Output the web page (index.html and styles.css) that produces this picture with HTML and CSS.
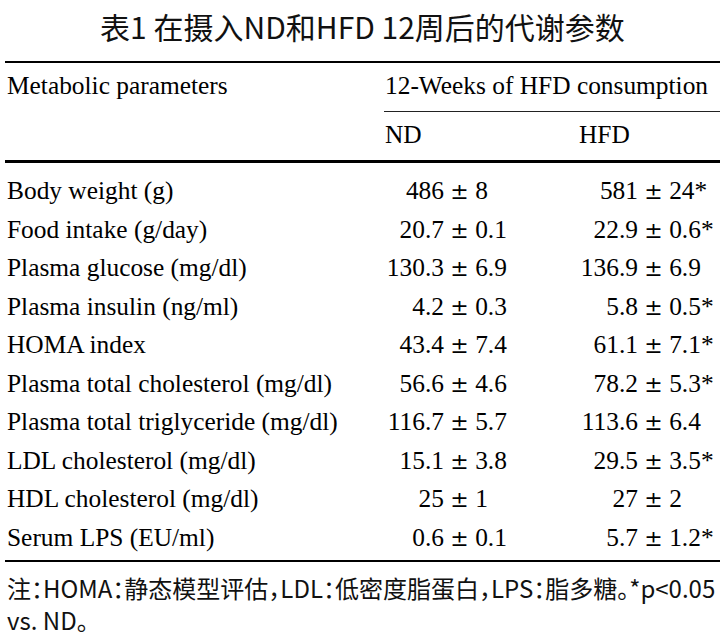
FILE: index.html
```html
<!DOCTYPE html>
<html lang="zh">
<head>
<meta charset="utf-8">
<title>表1 在摄入ND和HFD 12周后的代谢参数</title>
<link rel="stylesheet" href="styles.css">
</head>
<body>
<h1 class="title">表1 在摄入ND和HFD 12周后的代谢参数</h1>
<table class="data">
  <colgroup><col class="c-name"><col class="c-nd"><col class="c-hfd"></colgroup>
  <thead>
    <tr><th class="name" rowspan="2">Metabolic parameters</th><th class="group" colspan="2">12-Weeks of HFD consumption</th></tr>
    <tr><th class="sub">ND</th><th class="sub">HFD</th></tr>
  </thead>
  <tbody>
    <tr class="first"><td class="name">Body weight (g)</td><td class="val"><span class="l">486</span> <span class="pm">±</span> 8</td><td class="val"><span class="l">581</span> <span class="pm">±</span> 24*</td></tr>
    <tr><td class="name">Food intake (g/day)</td><td class="val"><span class="l">20.7</span> <span class="pm">±</span> 0.1</td><td class="val"><span class="l">22.9</span> <span class="pm">±</span> 0.6*</td></tr>
    <tr><td class="name">Plasma glucose (mg/dl)</td><td class="val"><span class="l">130.3</span> <span class="pm">±</span> 6.9</td><td class="val"><span class="l">136.9</span> <span class="pm">±</span> 6.9</td></tr>
    <tr><td class="name">Plasma insulin (ng/ml)</td><td class="val"><span class="l">4.2</span> <span class="pm">±</span> 0.3</td><td class="val"><span class="l">5.8</span> <span class="pm">±</span> 0.5*</td></tr>
    <tr><td class="name">HOMA index</td><td class="val"><span class="l">43.4</span> <span class="pm">±</span> 7.4</td><td class="val"><span class="l">61.1</span> <span class="pm">±</span> 7.1*</td></tr>
    <tr><td class="name">Plasma total cholesterol (mg/dl)</td><td class="val"><span class="l">56.6</span> <span class="pm">±</span> 4.6</td><td class="val"><span class="l">78.2</span> <span class="pm">±</span> 5.3*</td></tr>
    <tr><td class="name">Plasma total triglyceride (mg/dl)</td><td class="val"><span class="l">116.7</span> <span class="pm">±</span> 5.7</td><td class="val"><span class="l">113.6</span> <span class="pm">±</span> 6.4</td></tr>
    <tr><td class="name">LDL cholesterol (mg/dl)</td><td class="val"><span class="l">15.1</span> <span class="pm">±</span> 3.8</td><td class="val"><span class="l">29.5</span> <span class="pm">±</span> 3.5*</td></tr>
    <tr><td class="name">HDL cholesterol (mg/dl)</td><td class="val"><span class="l">25</span> <span class="pm">±</span> 1</td><td class="val"><span class="l">27</span> <span class="pm">±</span> 2</td></tr>
    <tr class="last"><td class="name">Serum LPS (EU/ml)</td><td class="val"><span class="l">0.6</span> <span class="pm">±</span> 0.1</td><td class="val"><span class="l">5.7</span> <span class="pm">±</span> 1.2*</td></tr>
  </tbody>
</table>
<p class="note">注：HOMA：静态模型评估，LDL：低密度脂蛋白，LPS：脂多糖。*p&lt;0.05<br>vs. ND。</p>
</body>
</html>
```

FILE: styles.css
```css
html, body {
  margin: 0;
  padding: 0;
  background: #fff;
  color: #000;
}

.title {
  margin: 0 0 9px;
  font-family: "Noto Sans CJK SC", "Noto Sans", sans-serif;
  font-size: 30px;
  font-weight: 400;
  line-height: 52px;
  text-align: center;
  color: #111;
}

.data {
  margin-left: 5px;
  width: 715px;
  table-layout: fixed;
  border-collapse: collapse;
  border-top: 2px solid #000;
  font-family: "Liberation Serif", "Times New Roman", serif;
  font-size: 25.4px;
}

.c-name { width: 379px; }
.c-nd { width: 194px; }
.c-hfd { width: 142px; }

.data thead {
  border-bottom: 3px solid #000;
}

.data tbody {
  border-bottom: 2px solid #000;
}

.data th {
  font-weight: 400;
  text-align: left;
  vertical-align: top;
  line-height: 30px;
  padding: 7px 0 11px 1px;
  white-space: nowrap;
}

.data th.name {
  padding-left: 2px;
}

.data th.group {
  border-bottom: 1.5px solid #222;
}

.data td {
  padding: 0;
  line-height: 38.5px;
  white-space: nowrap;
}

.data td.name {
  padding-left: 2px;
}

.data tr.first td {
  padding-top: 8px;
}

.data tr.last td {
  padding-bottom: 4px;
}

.val .l {
  display: inline-block;
  width: 60px;
  text-align: right;
}

.val .pm {
  font-family: "DejaVu Serif", serif;
  font-size: 22px;
  line-height: 0;
}

.note {
  margin: 10px 0 0;
  padding-left: 7px;
  font-family: "Noto Sans CJK SC", "Noto Sans", sans-serif;
  font-size: 24px;
  line-height: 32px;
  font-feature-settings: "halt";
  color: #111;
}
```
